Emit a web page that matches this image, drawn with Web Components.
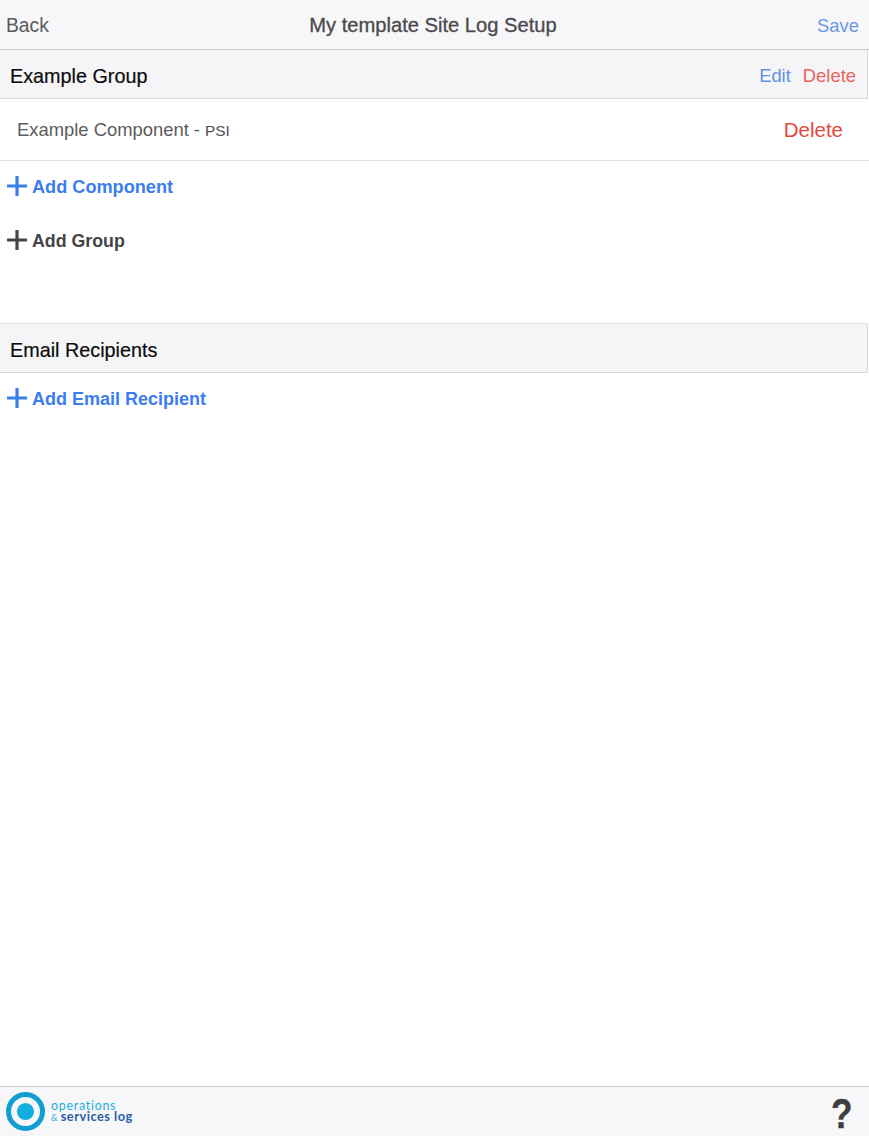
<!DOCTYPE html>
<html><head><meta charset="utf-8">
<style>
html,body{margin:0;padding:0;background:#fff;height:100%}
body{font-family:"Liberation Sans",Arial,sans-serif;width:869px;height:1136px;overflow:hidden}
app-shell{height:1136px}
</style></head>
<body>
<app-shell>
  <nav-bar slot="top" title-text="My template Site Log Setup"></nav-bar>
  <section-header label="Example Group" actions></section-header>
  <component-row name="Example Component" unit="PSI"></component-row>
  <add-action color="#3b7ded" label="Add Component" style="height:52px;font-size:18.15px"></add-action>
  <add-action color="#444446" label="Add Group" style="height:56px;font-size:17.8px"></add-action>
  <spacer-block style="height:54px"></spacer-block>
  <section-header label="Email Recipients" tall></section-header>
  <add-action color="#3b7ded" label="Add Email Recipient" style="height:52px;font-size:18px"></add-action>
  <app-footer slot="bottom"></app-footer>
</app-shell>
<script>
function el(name, css, html){
  customElements.define(name, class extends HTMLElement{
    connectedCallback(){
      if(this.shadowRoot) return;
      const r=this.attachShadow({mode:'open'});
      r.innerHTML='<style>'+css+'</style>'+(typeof html==='function'?html(this):html);
    }
  });
}
el('app-shell',`:host{display:flex;flex-direction:column;width:869px}
  main{flex:1;display:flex;flex-direction:column;min-height:0}`,
  `<slot name="top"></slot><main><slot></slot></main><slot name="bottom"></slot>`);
el('spacer-block',`:host{display:block}`,'');
el('nav-bar',`:host{display:grid;grid-template-columns:1fr auto 1fr;align-items:baseline;height:48px;line-height:48px;background:#f7f6f8;border-bottom:1.5px solid #c8c8ca;padding:1px 10px 0 6px;font-size:19.3px}
  .b{color:#5a5a5c}.t{color:#4a4a4c;-webkit-text-stroke:.3px #4a4a4c;font-size:20.15px;padding-left:1px}.s{color:#6c97e6;justify-self:end;font-size:18.4px}`,
  h=>`<span class="b">Back</span><span class="t">${h.getAttribute('title-text')}</span><span class="s">Save</span>`);
el('section-header',`:host{display:flex;align-items:center;justify-content:space-between;height:44px;padding:4px 11px 0 10px;margin-right:1px;background:#f5f5f7;border-bottom:1.5px solid #d9d9db;border-right:1px solid #dcdcde;font-size:19.8px}
  :host([tall]){height:44px;padding-top:4px;border-top:1px solid #e2e2e4}
  .l{color:#0d0d0f;-webkit-text-stroke:.2px #0d0d0f}
  .a{display:flex;gap:12px;font-size:18.4px}.e{color:#6291e4}.d{color:#e8675d}`,
  h=>`<span class="l">${h.getAttribute('label')}</span>`+(h.hasAttribute('actions')?`<span class="a"><span class="e">Edit</span><span class="d">Delete</span></span>`:''));
el('component-row',`:host{display:flex;align-items:center;justify-content:space-between;height:61px;padding:0 26px 0 17px;border-bottom:1.5px solid #e3e3e5;background:#fff}
  .n{color:#5c5c5e;font-size:18.4px}.u{font-size:15.4px;color:#4f4f51}.d{color:#e2483d;font-size:20.5px}`,
  h=>`<span class="n">${h.getAttribute('name')} - <span class="u">${h.getAttribute('unit')}</span></span><span class="d">Delete</span>`);
el('add-action',`:host{display:flex;align-items:center;gap:5px;padding-left:7px;font-weight:700;box-sizing:border-box;letter-spacing:0}
  svg{display:block;width:20px;height:20px;position:relative;top:-1px}`,
  h=>{const c=h.getAttribute('color');return `<svg viewBox="0 0 20 20"><path d="M0 10H20M10 0V20" stroke="${c}" stroke-width="3.2" fill="none"/></svg><span style="color:${c}">${h.getAttribute('label')}</span>`});
el('app-footer',`:host{display:flex;align-items:center;justify-content:space-between;height:49px;background:#f7f6f8;border-top:1px solid #cfcfd1;padding:0 17px 0 6px;flex:none}
  .logo{display:flex;align-items:center;gap:6px}
  .txt{display:flex;flex-direction:column;font-family:Lato,sans-serif;line-height:10.5px;font-size:12.4px;letter-spacing:.75px;position:relative;top:.5px}
  .o{color:#19afdc}.s{color:#2a5ea8;font-weight:700;font-size:12.8px;letter-spacing:.5px}.a{color:#19afdc;font-size:9px;font-weight:400}
  .q{font:700 40px/1 "Liberation Sans",sans-serif;color:#3e3e40;-webkit-text-stroke:.3px #3e3e40;position:relative;top:1px;transform:scale(.88,1.05);transform-origin:right center}`,
  `<div class="logo"><svg width="39" height="39" viewBox="0 0 39 39"><circle cx="19.5" cy="19.5" r="17" fill="none" stroke="#0f9fd2" stroke-width="5"/><circle cx="19.5" cy="19.5" r="8.6" fill="#13aee0"/></svg>
  <div class="txt"><span class="o">operations</span><span class="s"><span class="a">&amp; </span>services log</span></div></div><span class="q">?</span>`);
</script>
</body></html>
